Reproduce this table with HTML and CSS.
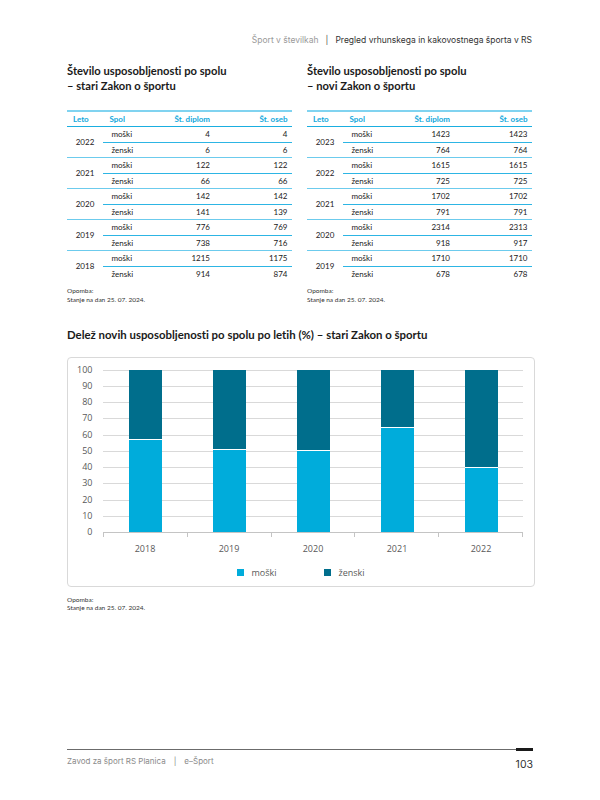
FILE: index.html
```html
<!DOCTYPE html>
<html lang="sl">
<head>
<meta charset="utf-8">
<title>Število usposobljenosti po spolu</title>
<link rel="stylesheet" href="styles.css">
</head>
<body>
<div class="page">
  <header class="topbar">
    <span class="muted">Šport v številkah</span>
    <span class="sep">|</span>
    <span class="strong">Pregled vrhunskega in kakovostnega športa v RS</span>
  </header>

  <section class="cols">
    <div class="col">
      <h2 class="ttl">Število usposobljenosti po spolu<br>– stari Zakon o športu</h2>
      <div class="tbl">
        <div class="thead"><span>Leto</span><span>Spol</span><span>Št. diplom</span><span>Št. oseb</span></div>
        <div class="grp"><div class="yr">2022</div><div class="rows">
          <div class="row"><span>moški</span><span>4</span><span>4</span></div>
          <div class="row"><span>ženski</span><span>6</span><span>6</span></div></div></div>
        <div class="grp"><div class="yr">2021</div><div class="rows">
          <div class="row"><span>moški</span><span>122</span><span>122</span></div>
          <div class="row"><span>ženski</span><span>66</span><span>66</span></div></div></div>
        <div class="grp"><div class="yr">2020</div><div class="rows">
          <div class="row"><span>moški</span><span>142</span><span>142</span></div>
          <div class="row"><span>ženski</span><span>141</span><span>139</span></div></div></div>
        <div class="grp"><div class="yr">2019</div><div class="rows">
          <div class="row"><span>moški</span><span>776</span><span>769</span></div>
          <div class="row"><span>ženski</span><span>738</span><span>716</span></div></div></div>
        <div class="grp"><div class="yr">2018</div><div class="rows">
          <div class="row"><span>moški</span><span>1215</span><span>1175</span></div>
          <div class="row"><span>ženski</span><span>914</span><span>874</span></div></div></div>
      </div>
      <p class="note">Opomba:<br>Stanje na dan 25. 07. 2024.</p>
    </div>

    <div class="col">
      <h2 class="ttl">Število usposobljenosti po spolu<br>– novi Zakon o športu</h2>
      <div class="tbl">
        <div class="thead"><span>Leto</span><span>Spol</span><span>Št. diplom</span><span>Št. oseb</span></div>
        <div class="grp"><div class="yr">2023</div><div class="rows">
          <div class="row"><span>moški</span><span>1423</span><span>1423</span></div>
          <div class="row"><span>ženski</span><span>764</span><span>764</span></div></div></div>
        <div class="grp"><div class="yr">2022</div><div class="rows">
          <div class="row"><span>moški</span><span>1615</span><span>1615</span></div>
          <div class="row"><span>ženski</span><span>725</span><span>725</span></div></div></div>
        <div class="grp"><div class="yr">2021</div><div class="rows">
          <div class="row"><span>moški</span><span>1702</span><span>1702</span></div>
          <div class="row"><span>ženski</span><span>791</span><span>791</span></div></div></div>
        <div class="grp"><div class="yr">2020</div><div class="rows">
          <div class="row"><span>moški</span><span>2314</span><span>2313</span></div>
          <div class="row"><span>ženski</span><span>918</span><span>917</span></div></div></div>
        <div class="grp"><div class="yr">2019</div><div class="rows">
          <div class="row"><span>moški</span><span>1710</span><span>1710</span></div>
          <div class="row"><span>ženski</span><span>678</span><span>678</span></div></div></div>
      </div>
      <p class="note">Opomba:<br>Stanje na dan 25. 07. 2024.</p>
    </div>
  </section>

  <h2 class="ttl ttl-chart">Delež novih usposobljenosti po spolu po letih (%) – stari Zakon o športu</h2>

  <div class="chart">
    <div class="plot">
      <div class="ylab">
        <span>100</span><span>90</span><span>80</span><span>70</span><span>60</span><span>50</span><span>40</span><span>30</span><span>20</span><span>10</span><span>0</span>
      </div>
      <div class="area">
        <div class="gl"><div></div><div></div><div></div><div></div><div></div><div></div><div></div><div></div><div></div><div></div></div>
        <div class="bars">
          <div class="cat"><div class="bar"><div class="f"></div><div class="m" style="height:57.07%"></div></div></div>
          <div class="cat"><div class="bar"><div class="f"></div><div class="m" style="height:51.25%"></div></div></div>
          <div class="cat"><div class="bar"><div class="f"></div><div class="m" style="height:50.18%"></div></div></div>
          <div class="cat"><div class="bar"><div class="f"></div><div class="m" style="height:64.89%"></div></div></div>
          <div class="cat"><div class="bar"><div class="f"></div><div class="m" style="height:40%"></div></div></div>
        </div>
      </div>
      <div class="blank"></div>
      <div class="ticks"><span></span><span></span><span></span><span></span><span></span></div>
      <div class="blank"></div>
      <div class="xlab"><span>2018</span><span>2019</span><span>2020</span><span>2021</span><span>2022</span></div>
    </div>
    <div class="legend">
      <span class="li"><i class="sw sw-m"></i>moški</span>
      <span class="li"><i class="sw sw-f"></i>ženski</span>
    </div>
  </div>
  <p class="note note-chart">Opomba:<br>Stanje na dan 25. 07. 2024.</p>

  <footer class="foot">
    <div class="rule"></div>
    <div class="foot-row">
      <span class="foot-l"><span>Zavod za šport RS Planica</span><span class="sep">|</span><span>e–Šport</span></span>
      <span class="pnum">103</span>
    </div>
  </footer>
</div>
</body>
</html>
```

FILE: styles.css
```css
body {
  margin: 0;
  background: #fff;
}

.page {
  width: 600px;
  height: 800px;
  box-sizing: border-box;
  padding: 0 67px;
  display: flex;
  flex-direction: column;
  font-family: Lato, "Noto Sans", sans-serif;
  font-variant-ligatures: none;
  color: #1a1a1a;
}

/* top bar */
.topbar {
  padding-top: 35px;
  display: flex;
  justify-content: flex-end;
  gap: 7px;
  font-family: Inter, "Noto Sans", sans-serif;
  font-size: 8.5px;
  line-height: 11px;
  margin-right: 1px;
}
.topbar .muted { color: #9a9a9a; }
.topbar .sep { color: #555; }
.topbar .strong { color: #333; }

/* columns */
.cols {
  display: flex;
  gap: 15px;
  margin-top: 17px;
}
.col {
  width: 225px;
  flex: none;
}

.ttl {
  margin: 0;
  font-size: 11.2px;
  line-height: 15px;
  font-weight: 700;
  color: #1a1a1a;
}

/* table */
.tbl {
  margin-top: 17px;
  border-top: 2px solid #80d3f0;
  font-size: 8px;
}
.thead {
  display: grid;
  grid-template-columns: 36px 50px 62px 1fr;
  height: 14px;
  align-items: center;
  border-bottom: 1.5px solid #1aaee0;
  color: #12a8dc;
  font-weight: 700;
}
.thead span:nth-child(1) { padding-left: 6px; }
.thead span:nth-child(2) { padding-left: 6.5px; }
.thead span:nth-child(3) { text-align: right; padding-right: 5px; }
.thead span:nth-child(4) { text-align: right; padding-right: 4.5px; }

.grp {
  display: grid;
  grid-template-columns: 36px 1fr;
}
.grp + .grp { border-top: 1.5px solid #6ccbed; }
.yr {
  display: flex;
  align-items: center;
  justify-content: center;
}
.row {
  display: grid;
  grid-template-columns: 50px 62px 1fr;
  height: 14.5px;
  align-items: center;
}
.row:first-child { border-bottom: 1px solid #2db5e4; }
.row span:nth-child(1) { padding-left: 8.5px; }
.row span:nth-child(2) { text-align: right; padding-right: 5px; }
.row span:nth-child(3) { text-align: right; padding-right: 4.5px; }

.note {
  margin: 6px 0 0;
  font-size: 6.5px;
  line-height: 8.5px;
  color: #333;
}

/* chart */
.ttl-chart { margin-top: 22.5px; }
.ttl-chart { font-size: 11.4px; }

.chart {
  margin-top: 15px;
  width: 468px;
  height: 230px;
  box-sizing: border-box;
  border: 1px solid #d9d9d9;
  border-radius: 4px;
  padding-top: 12px;
  font-family: "Open Sans", "Noto Sans", sans-serif;
  font-size: 9px;
  color: #595959;
}
.plot {
  display: grid;
  grid-template-columns: 35px 420px;
}
.ylab {
  height: 162.5px;
  display: flex;
  flex-direction: column;
  justify-content: space-between;
  align-items: flex-end;
  padding-right: 10.5px;
}
.ylab span {
  height: 0;
  display: flex;
  align-items: center;
  line-height: 12px;
}
.area {
  display: grid;
  height: 162.5px;
}
.gl, .bars { grid-area: 1 / 1; }
.gl {
  display: flex;
  flex-direction: column;
}
.gl div {
  flex: 1;
  border-top: 1px solid #d9d9d9;
}
.bars { display: flex; }
.cat {
  flex: 1;
  display: flex;
  justify-content: center;
}
.bar {
  width: 33px;
  display: flex;
  flex-direction: column;
}
.bar .f { flex: 1; background: #006e8c; }
.bar .m {
  background: #00acdb;
  border-top: 1px solid #fff;
  box-sizing: border-box;
}
.ticks {
  display: flex;
  height: 4px;
  border-top: 1px solid #c4c4c4;
}
.ticks span {
  flex: 1;
  border-left: 1px solid #c4c4c4;
}
.ticks span:last-child { border-right: 1px solid #c4c4c4; }
.xlab {
  display: flex;
  margin-top: 5.5px;
  line-height: 12px;
}
.xlab span {
  flex: 1;
  text-align: center;
}
.legend {
  display: flex;
  justify-content: center;
  gap: 48px;
  margin-top: 12px;
  line-height: 12px;
}
.li {
  display: flex;
  align-items: center;
  gap: 7px;
}
.sw {
  display: block;
  width: 7px;
  height: 7px;
}
.sw-m { background: #00acdb; }
.sw-f { background: #006e8c; }

.note-chart { margin-top: 9px; }

/* footer */
.foot {
  margin-top: auto;
  padding-bottom: 29px;
  font-family: Inter, "Noto Sans", sans-serif;
}
.rule {
  height: 1px;
  background: #6b6b6b;
  display: flex;
  justify-content: flex-end;
}
.rule::after {
  content: "";
  width: 17px;
  height: 2.5px;
  margin-top: -0.75px;
  background: #1a1a1a;
}
.foot-row {
  display: flex;
  justify-content: space-between;
  align-items: flex-start;
  margin-top: 6px;
}
.foot-l {
  display: flex;
  gap: 8px;
  font-size: 8px;
  line-height: 11px;
  color: #8a8a8a;
}
.pnum {
  margin-top: 3px;
  font-size: 10.5px;
  line-height: 12px;
  color: #333;
}
```
